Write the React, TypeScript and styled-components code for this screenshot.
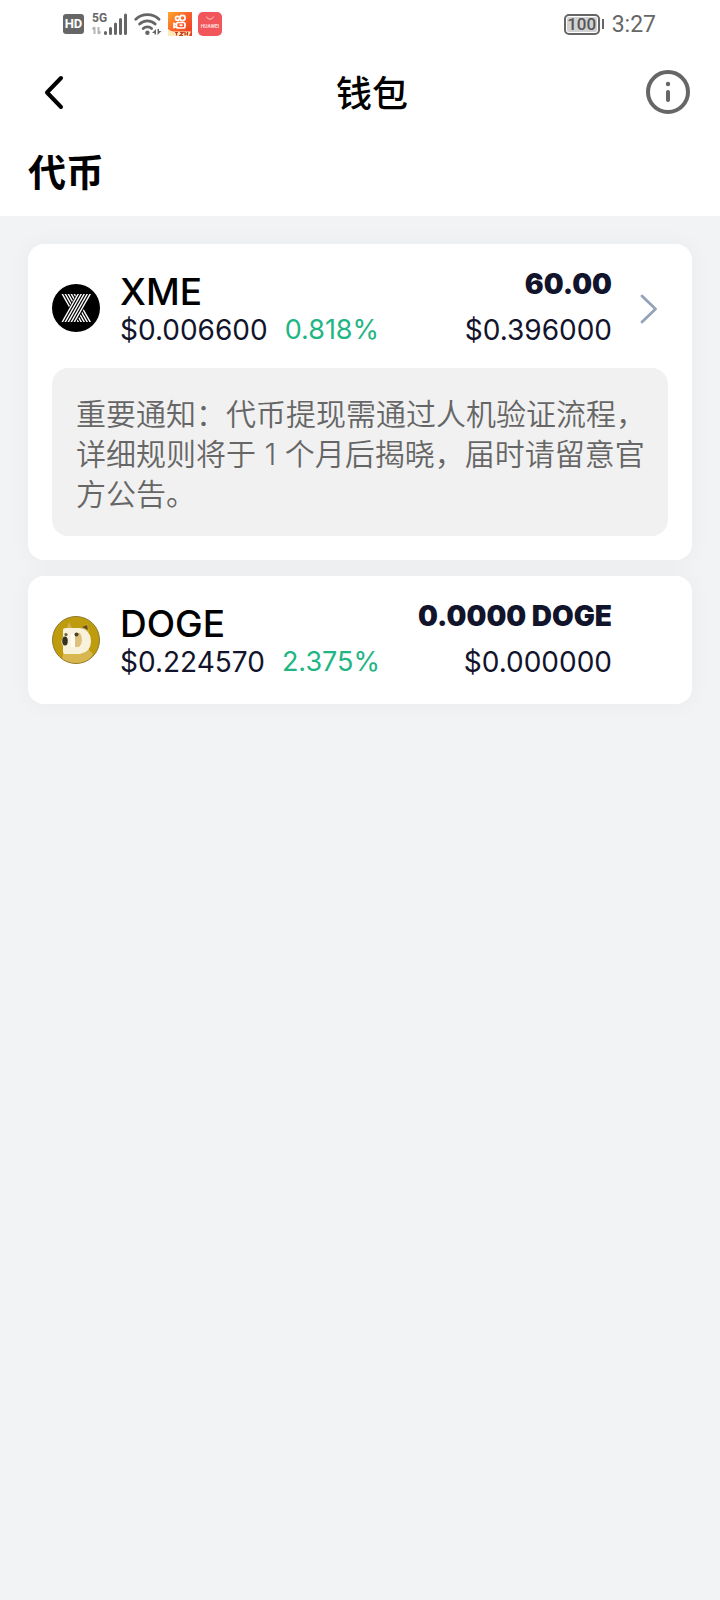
import React from "react";
import styled, { createGlobalStyle } from "styled-components";

const GlobalStyle = createGlobalStyle`
  * { box-sizing: border-box; }
  body {
    margin: 0;
    background: #f2f3f5;
    font-family: Inter, "Noto Sans CJK SC", sans-serif;
    color: #000;
  }
  h1, h2, h3, p, ul { margin: 0; padding: 0; }
`;

const Page = styled.div`
  min-height: 100vh;
  background: #f2f3f5;
`;

const Top = styled.header`
  background: #fff;
  padding-bottom: 20px;
`;

const StatusBar = styled.div`
  display: flex;
  align-items: center;
  justify-content: space-between;
  height: 48px;
  padding: 0 64px 0 63px;
  color: #666;
  font-family: Roboto, sans-serif;
`;

const StatusGroup = styled.div<{ $gap: number }>`
  display: flex;
  align-items: center;
  gap: ${(p) => p.$gap}px;
`;

const HdBadge = styled.span`
  width: 21px;
  height: 20px;
  margin-right: 2px;
  border-radius: 3px;
  background: #666;
  color: #fff;
  font-size: 13px;
  font-weight: 700;
  line-height: 20px;
  text-align: center;
`;

const Battery = styled.span`
  width: 36px;
  height: 21px;
  padding: 1px;
  border: 2px solid #666;
  border-radius: 5px;
  font-size: 17px;
  font-weight: 500;
  line-height: 15px;
  text-align: center;
  color: #555;
  background: #d2d2d2;
  background-clip: content-box;
`;

const BatteryTip = styled.span`
  width: 2px;
  height: 10px;
  background: #666;
`;

const Clock = styled.time`
  margin-left: 6px;
  padding-top: 2px;
  font-size: 23px;
  line-height: 28px;
`;

const NavBar = styled.nav`
  display: flex;
  align-items: center;
  height: 88px;
  padding: 0 30px 0 28px;
`;

const NavButton = styled.button<{ $width: number }>`
  display: flex;
  align-items: center;
  width: ${(p) => p.$width}px;
  height: 48px;
  padding: 0;
  border: 0;
  background: none;
  cursor: pointer;
`;

const Title = styled.h1`
  flex: 1;
  && { padding-top: 4px; }
  font-size: 36px;
  font-weight: 500;
  line-height: 48px;
  text-align: center;
`;

const SectionTitle = styled.h2`
  && { padding: 12px 28px 0; }
  font-size: 38px;
  font-weight: 700;
  line-height: 48px;
`;

const List = styled.ul`
  display: flex;
  flex-direction: column;
  gap: 16px;
  && { padding: 28px; }
  list-style: none;
`;

const Card = styled.li`
  display: flex;
  flex-direction: column;
  gap: 20px;
  padding: 24px;
  border-radius: 16px;
  background: #fff;
  box-shadow: 0 0 24px rgba(0, 0, 0, 0.04);
`;

const Row = styled.a`
  display: flex;
  align-items: center;
  height: 80px;
  color: #11142b;
  text-decoration: none;
`;

const Names = styled.div`
  flex: 1;
  padding-left: 20px;
`;

const TokenName = styled.h3`
  font-size: 37px;
  font-weight: 500;
  line-height: 44px;
  color: #000;
`;

const Price = styled.p`
  display: flex;
  gap: 17px;
  font-size: 28px;
  line-height: 32px;
`;

const Change = styled.span`
  font-size: 27px;
  color: #1fb584;
`;

const Amounts = styled.div`
  display: flex;
  flex-direction: column;
  gap: 12px;
  text-align: right;
`;

const Amount = styled.strong`
  font-size: 28px;
  font-weight: 900;
  line-height: 32px;
`;

const Value = styled.span`
  font-size: 28px;
  line-height: 36px;
`;

const ArrowSlot = styled.span`
  display: flex;
  justify-content: center;
  width: 56px;
  padding-left: 18px;
`;

const Notice = styled.p`
  && { padding: 26px 22px 22px 24px; }
  border-radius: 16px;
  background: #f1f1f1;
  color: #666;
  font-size: 30px;
  font-weight: 350;
  line-height: 40px;
`;

const SignalIcon = () => (
  <svg width="36" height="24" viewBox="0 0 36 24" aria-label="5G">
    <text x="0" y="10" fontSize="12" fontWeight="700" fill="#666">5G</text>
    <g stroke="#b5b5b5" strokeWidth="2" fill="none">
      <path d="M2.500 15v7M0.500 17.500L2.500 15M6.500 15v7M8.500 19.500L6.500 22" />
    </g>
    <g stroke="#666" strokeWidth="3" strokeLinecap="round">
      <path d="M13.500 20.500v1M18.500 16.500v5M23.500 12v9.500M28.500 7.500v14M33.500 3v18.500" />
    </g>
  </svg>
);

const WifiIcon = () => (
  <svg width="28" height="24" viewBox="0 0 28 24" aria-label="Wi-Fi">
    <g fill="none" stroke="#666" strokeWidth="2.800" strokeLinecap="round">
      <path d="M1.800 7.200a17 17 0 0 1 23.200 0" />
      <path d="M5.600 12a11.300 11.300 0 0 1 15.600 0" />
      <path d="M9.200 16.500a6 6 0 0 1 8.400 0" />
    </g>
    <circle cx="13.400" cy="20.800" r="2.200" fill="#666" />
    <path d="M18 21l4-4v5.500h-1.500V21zM23.500 17H25v2h2.500l-4 4z" fill="#666" />
  </svg>
);

const VideoAppIcon = () => (
  <svg width="24" height="24" viewBox="0 0 24 24" aria-hidden="true">
    <defs>
      <linearGradient id="video" x1="0" y1="0" x2="1" y2="1">
        <stop offset="0" stopColor="#ffa72b" />
        <stop offset="0.500" stopColor="#f9602b" />
        <stop offset="1" stopColor="#e93a26" />
      </linearGradient>
    </defs>
    <rect width="24" height="24" fill="url(#video)" />
    <g fill="none" stroke="#fff" strokeWidth="1.700">
      <circle cx="9.500" cy="6.300" r="2" />
      <circle cx="14.500" cy="6" r="2.600" />
      <rect x="8.500" y="10.500" width="8.500" height="5.500" rx="1.800" />
      <path d="M8.500 12.500l-2.500-1v4l2.500-1" />
      <path d="M11.500 13.200h3" />
    </g>
    <path d="M0 17q3 2.500 6 2.500h17l-2 4.500H0z" fill="#ffe9b8" />
    <path d="M7 20.500h3M8.500 20v3.500M12 20.500h3l-3 3h3M17 20v3.500M17 22h3M19.500 20v3.500" stroke="#c3391f" strokeWidth="1.200" fill="none" />
  </svg>
);

const StoreAppIcon = () => (
  <svg width="24" height="24" viewBox="0 0 24 24" aria-hidden="true">
    <rect width="24" height="24" rx="5" fill="#f0565a" />
    <path d="M8.500 4.500a3.600 3.600 0 0 0 7 0" fill="none" stroke="#ffc4c4" strokeWidth="1" />
    <text x="12" y="15.500" fontSize="5" fontWeight="700" fill="#ffdcdc" textAnchor="middle">HUAWEI</text>
  </svg>
);

const BackIcon = () => (
  <svg width="36" height="36" viewBox="0 0 36 36" aria-hidden="true">
    <path d="M33 4L19 18.500L33 33" fill="none" stroke="#000" strokeWidth="4" strokeLinecap="round" strokeLinejoin="round" />
  </svg>
);

const InfoIcon = () => (
  <svg width="44" height="44" viewBox="0 0 44 44" aria-hidden="true">
    <circle cx="22" cy="22" r="20" fill="none" stroke="#666" strokeWidth="4" />
    <circle cx="22" cy="14" r="2.200" fill="#666" />
    <path d="M22 22v8" stroke="#666" strokeWidth="4" strokeLinecap="round" />
  </svg>
);

const ChevronIcon = () => (
  <svg width="18" height="32" viewBox="0 0 18 32" aria-hidden="true">
    <path d="M2 4L15.500 17L2 30" fill="none" stroke="#94a3b8" strokeWidth="2.800" strokeLinecap="round" strokeLinejoin="round" />
  </svg>
);

const stripes = [0, 3, 6, 9, 12];

const XmeIcon = () => (
  <svg width="48" height="48" viewBox="0 0 48 48" aria-hidden="true">
    <defs>
      <clipPath id="mark"><rect x="8" y="10" width="32" height="28" /></clipPath>
    </defs>
    <circle cx="24" cy="24" r="24" fill="#000" />
    <g clipPath="url(#mark)" stroke="#fff" strokeWidth="1.400">
      {stripes.map((s) => <path key={s} d={`M${10 + s} 9.500L${26.5 + s} 38.500`} />)}
      <path d="M25 9.500H41L24 38.500H8z" fill="#000" stroke="none" />
      {stripes.map((s) => <path key={s} d={`M${26.5 + s} 9.500L${10 + s} 38.500`} />)}
    </g>
  </svg>
);

const DogeIcon = () => (
  <svg width="48" height="48" viewBox="0 0 48 48" aria-hidden="true">
    <defs>
      <clipPath id="coin"><circle cx="24" cy="24" r="23" /></clipPath>
    </defs>
    <circle cx="24" cy="24" r="23.500" fill="#bf9c0e" stroke="#8f7a2c" />
    <g clipPath="url(#coin)">
      <path d="M9 48L12 34L20 37L36 33L41 38L34 48z" fill="#d8b650" />
      <path d="M15 12L17 6L20 12zM29 12L35 8L37 16z" fill="#cfae52" />
      <path d="M30 11l5-2 1 5z" fill="#5e4a22" />
      <path d="M11 14q0-2 3-2h14q11 2 11 13t-11 13H13q-2 0-2-3V30q-3-4 0-9z" fill="#f8f2dd" />
      <path d="M23 17h5q2 3 2 7t-3 7h-4z" fill="#dfc17c" />
      <path d="M23 18h-4v13h4z" fill="#fffdf4" />
      <ellipse cx="13" cy="25" rx="2.800" ry="4.500" fill="#35331f" />
      <circle cx="14" cy="18.500" r="1.600" fill="#6a5c35" />
      <circle cx="24.500" cy="18.500" r="2" fill="#4a4226" />
    </g>
  </svg>
);

type Token = {
  symbol: string;
  price: string;
  change: string;
  amount: string;
  value: string;
  icon: React.ReactNode;
  arrow?: boolean;
  notice?: string;
};

const tokens: Token[] = [
  {
    symbol: "XME",
    price: "$0.006600",
    change: "0.818%",
    amount: "60.00",
    value: "$0.396000",
    icon: <XmeIcon />,
    arrow: true,
    notice: "重要通知：代币提现需通过人机验证流程，详细规则将于 1 个月后揭晓，届时请留意官方公告。",
  },
  {
    symbol: "DOGE",
    price: "$0.224570",
    change: "2.375%",
    amount: "0.0000 DOGE",
    value: "$0.000000",
    icon: <DogeIcon />,
  },
];

export default function App() {
  return (
    <Page lang="zh-CN">
      <GlobalStyle />
      <Top>
        <StatusBar>
          <StatusGroup $gap={6}>
            <HdBadge>HD</HdBadge>
            <SignalIcon />
            <WifiIcon />
            <StatusGroup $gap={6}>
              <VideoAppIcon />
              <StoreAppIcon />
            </StatusGroup>
          </StatusGroup>
          <StatusGroup $gap={2}>
            <Battery>100</Battery>
            <BatteryTip />
            <Clock>3:27</Clock>
          </StatusGroup>
        </StatusBar>
        <NavBar>
          <NavButton $width={70} aria-label="返回"><BackIcon /></NavButton>
          <Title>钱包</Title>
          <NavButton $width={44} aria-label="说明"><InfoIcon /></NavButton>
        </NavBar>
        <SectionTitle>代币</SectionTitle>
      </Top>
      <List>
        {tokens.map((t) => (
          <Card key={t.symbol}>
            <Row href={`#${t.symbol}`}>
              {t.icon}
              <Names>
                <TokenName>{t.symbol}</TokenName>
                <Price>{t.price}<Change>{t.change}</Change></Price>
              </Names>
              <Amounts>
                <Amount>{t.amount}</Amount>
                <Value>{t.value}</Value>
              </Amounts>
              <ArrowSlot>{t.arrow && <ChevronIcon />}</ArrowSlot>
            </Row>
            {t.notice && <Notice>{t.notice}</Notice>}
          </Card>
        ))}
      </List>
    </Page>
  );
}
